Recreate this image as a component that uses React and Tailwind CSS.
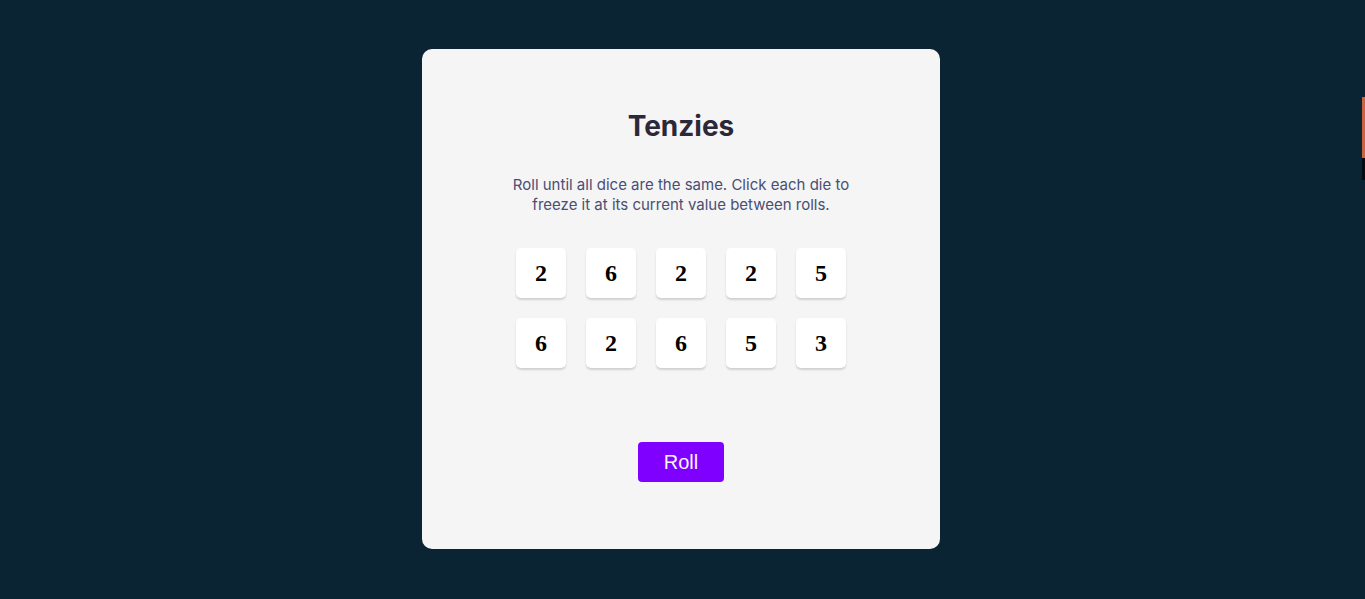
import React from "react";

const dice = [2, 6, 2, 2, 5, 6, 2, 6, 5, 3];

export default function App() {
  return (
    <div className="flex h-screen w-full bg-[#0B2434]">
      <div className="flex flex-1 items-start justify-center pt-[49px]">
        <main className="flex h-[500px] w-[518px] flex-col items-center rounded-[10px] bg-[#F5F5F5]">
          <h1
            className="mt-[60px] text-[28px] font-bold leading-[34px] text-[#2B283A]"
            style={{ fontFamily: "Inter, sans-serif" }}
          >
            Tenzies
          </h1>
          <p
            className="mt-[32px] w-[345px] text-center text-[15px] leading-[20px] text-[#4A4E74]"
            style={{ fontFamily: "Inter, sans-serif" }}
          >
            Roll until all dice are the same. Click each die to freeze it at its current value between rolls.
          </p>
          <div className="mt-[33px] grid grid-cols-5 gap-[20px]">
            {dice.map((d, i) => (
              <button
                key={i}
                className="flex h-[50px] w-[50px] items-center justify-center rounded-[5px] bg-white text-[24px] font-bold text-black shadow-[0_2px_2px_rgba(0,0,0,0.15)]"
                style={{ fontFamily: '"Liberation Serif", serif' }}
              >
                {d}
              </button>
            ))}
          </div>
          <button
            className="mt-[74px] h-[40px] w-[86px] rounded-[4px] bg-[#7F00FF] text-[20px] text-[#F5F5F5]"
            style={{ fontFamily: '"Liberation Sans", Arial, sans-serif' }}
          >
            Roll
          </button>
        </main>
      </div>
      <div className="flex w-[3px] flex-col">
        <div className="h-[97px]" />
        <div className="h-[61px] bg-[#C8643F]" />
        <div className="h-[22px] bg-[#050b10]" />
      </div>
    </div>
  );
}
